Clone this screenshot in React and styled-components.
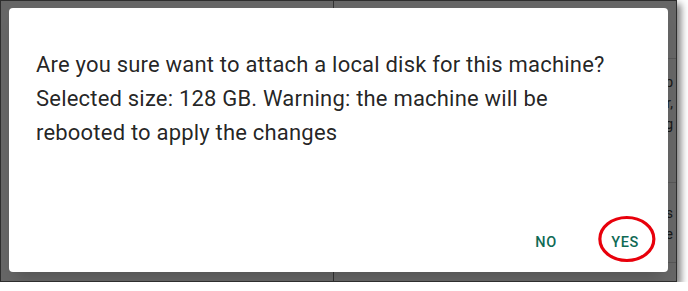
import React from 'react';
import styled, { createGlobalStyle } from 'styled-components';

const GlobalStyle = createGlobalStyle`
  html, body {
    margin: 0;
    padding: 0;
    background: #ffffff;
  }
  body {
    font-family: Roboto, "Liberation Sans", Arial, sans-serif;
  }
`;

// captured window with its drop shadow
const Frame = styled.div`
  position: relative;
  width: 677px;
  height: 282px;
  box-sizing: border-box;
  border: 1px solid #2e2e2e;
  box-shadow: 4px 4px 7px rgba(0, 0, 0, 0.5);
  overflow: hidden;
  background: #ffffff;
`;

// page that sits under the modal
const Page = styled.div`
  display: flex;
  height: 100%;
`;

const SidePanel = styled.div`
  flex: 0 0 332px;
  border-right: 1px solid #7a7a7a;
`;

const MainPanel = styled.div`
  flex: 1;
  min-width: 0;
  display: flex;
  flex-direction: column;
`;

const PanelRow = styled.div`
  height: ${(p) => p.$h}px;
  box-sizing: border-box;
  border-bottom: 1px solid #d6d6d6;
  padding: ${(p) => p.$pad || '0'};
  display: flex;
  flex-direction: column;
  align-items: flex-end;
  gap: 1px;
`;

const PageText = styled.div`
  font-size: 14px;
  line-height: 20px;
  color: #3a3a3a;
  white-space: nowrap;
  padding-right: 3px;
`;

const Overlay = styled.div`
  position: absolute;
  inset: 0;
  background: rgba(0, 0, 0, 0.6);
  display: flex;
  padding: 7px 8px 9px 8px;
`;

const Dialog = styled.div`
  flex: 1;
  background: #ffffff;
  border-radius: 4px;
  display: flex;
  flex-direction: column;
  box-shadow: 0 11px 15px -7px rgba(0, 0, 0, 0.2);
`;

const Message = styled.p`
  flex: 1;
  margin: 0;
  padding: 40px 27px 0 27px;
  font-size: 22px;
  line-height: 34px;
  color: rgba(0, 0, 0, 0.87);
  letter-spacing: 0.2px;
`;

const Actions = styled.div`
  display: flex;
  justify-content: flex-end;
  gap: 15px;
  padding: 0 11px 11px 0;
`;

const TextButton = styled.button`
  position: relative;
  min-width: 64px;
  height: 36px;
  padding: 6px 8px;
  border: 0;
  background: transparent;
  font-family: Roboto, "Liberation Sans", Arial, sans-serif;
  font-size: 14.5px;
  font-weight: 500;
  line-height: 24px;
  letter-spacing: 0.6px;
  text-transform: uppercase;
  color: #0f6a55;
  cursor: pointer;
`;

// red annotation drawn round the button
const Mark = styled.svg`
  position: absolute;
  left: 50%;
  top: 50%;
  width: 62px;
  height: 50px;
  transform: translate(-47%, -58%);
  pointer-events: none;
  overflow: visible;
`;

export default function App() {
  return (
    <>
      <GlobalStyle />
      <Frame>
        <Page>
          <SidePanel />
          <MainPanel>
            <PanelRow $h={58} />
            <PanelRow $h={124} $pad="13px 0 0 0">
              <PageText>Storage app</PageText>
              <PageText>Attached by user,</PageText>
              <PageText>Settings config</PageText>
            </PanelRow>
            <PanelRow $h={80} $pad="20px 0 0 0">
              <PageText>Disk status</PageText>
              <PageText>Size to change</PageText>
            </PanelRow>
          </MainPanel>
        </Page>
        <Overlay>
          <Dialog>
            <Message>
              Are you sure want to attach a local disk for this machine?
              <br />
              Selected size: 128 GB. Warning: the machine will be rebooted to apply the changes
            </Message>
            <Actions>
              <TextButton>No</TextButton>
              <TextButton>
                Yes
                <Mark viewBox="0 0 62 50">
                  <ellipse cx="31" cy="25" rx="27" ry="21.5" fill="none" stroke="#e8000b" strokeWidth="3.2" />
                </Mark>
              </TextButton>
            </Actions>
          </Dialog>
        </Overlay>
      </Frame>
    </>
  );
}
